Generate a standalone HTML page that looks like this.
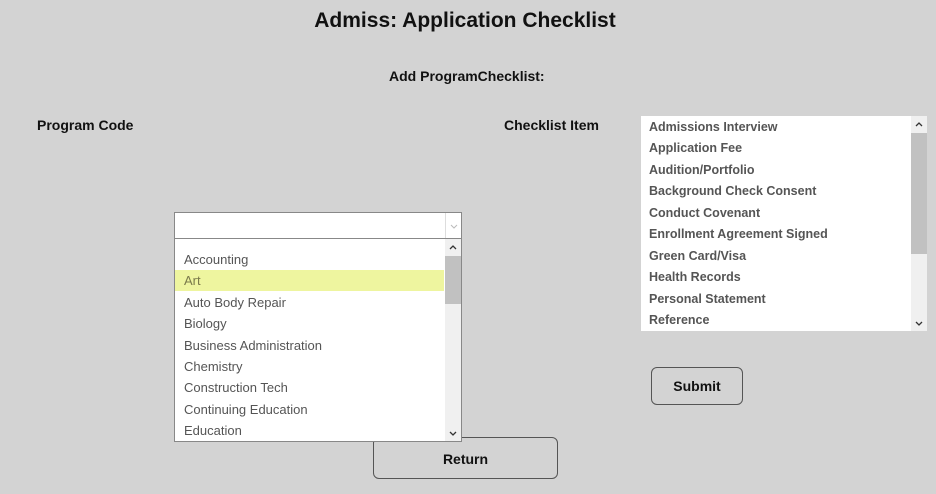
<!DOCTYPE html><html><head><style>
body{margin:0;width:936px;height:494px;background:#d3d3d3;font-family:"Liberation Sans",sans-serif;position:relative;overflow:hidden}
.a{position:absolute;white-space:nowrap}
.h{font-weight:bold;color:#111}
.li{position:absolute;left:9px;font-size:13px;color:#555}
.ri{position:absolute;left:8px;font-size:12.5px;font-weight:bold;color:#555}
.btn{position:absolute;border:1px solid #555;border-radius:6px;background:#d3d3d3;font-weight:bold;font-size:14px;color:#111;text-align:center}
.ar{position:absolute;right:4px}
</style></head><body>
<div class="a h" style="left:0;width:930px;text-align:center;top:9px;font-size:21px">Admiss: Application Checklist</div>
<div class="a h" style="left:389px;top:68px;font-size:14px">Add ProgramChecklist:</div>
<div class="a h" style="left:37px;top:117px;font-size:14px">Program Code</div>
<div class="a h" style="left:504px;top:117px;font-size:14px">Checklist Item</div>

<div class="btn" style="left:373px;top:437px;width:183px;height:40px;line-height:42px">Return</div>

<div class="a" style="left:174px;top:212px;width:286px;height:25px;background:#fff;border:1px solid #888"><svg style="position:absolute;right:3px;top:11px" width="8" height="5"><path d="M1 1L4 4L7 1" stroke="#bbb" fill="none"/></svg><div style="position:absolute;right:15px;top:0;bottom:0;border-left:1px solid #ddd"></div></div>
<div class="a" style="left:174px;top:238px;width:286px;height:202px;background:#fff;border:1px solid #888;overflow:hidden">
<div style="position:absolute;left:0;top:31px;width:269px;height:21px;background:#eef59f"></div>
<div class="li" style="top:13px">Accounting</div>
<div class="li" style="top:34px;color:#7a7a4a">Art</div>
<div class="li" style="top:56px">Auto Body Repair</div>
<div class="li" style="top:77px">Biology</div>
<div class="li" style="top:99px">Business Administration</div>
<div class="li" style="top:120px">Chemistry</div>
<div class="li" style="top:141px">Construction Tech</div>
<div class="li" style="top:163px">Continuing Education</div>
<div class="li" style="top:184px">Education</div>
<div style="position:absolute;right:0;top:0;width:16px;height:202px;background:#f0f0f0"></div>
<div style="position:absolute;right:0;top:17px;width:16px;height:48px;background:#c1c1c1"></div>
<svg class="ar" style="top:6px" width="8" height="5"><path d="M1 4L4 1L7 4" stroke="#333" stroke-width="1.3" fill="none"/></svg>
<svg class="ar" style="bottom:5px" width="8" height="5"><path d="M1 1L4 4L7 1" stroke="#333" stroke-width="1.3" fill="none"/></svg>
</div>

<div class="a" style="left:641px;top:116px;width:286px;height:215px;background:#fff;overflow:hidden">
<div class="ri" style="top:4px">Admissions Interview</div>
<div class="ri" style="top:25px">Application Fee</div>
<div class="ri" style="top:47px">Audition/Portfolio</div>
<div class="ri" style="top:68px">Background Check Consent</div>
<div class="ri" style="top:90px">Conduct Covenant</div>
<div class="ri" style="top:111px">Enrollment Agreement Signed</div>
<div class="ri" style="top:133px">Green Card/Visa</div>
<div class="ri" style="top:154px">Health Records</div>
<div class="ri" style="top:176px">Personal Statement</div>
<div class="ri" style="top:197px">Reference</div>
<div style="position:absolute;right:0;top:0;width:16px;height:215px;background:#f0f0f0"></div>
<div style="position:absolute;right:0;top:17px;width:16px;height:121px;background:#c1c1c1"></div>
<svg class="ar" style="top:6px" width="8" height="5"><path d="M1 4L4 1L7 4" stroke="#333" stroke-width="1.3" fill="none"/></svg>
<svg class="ar" style="bottom:5px" width="8" height="5"><path d="M1 1L4 4L7 1" stroke="#333" stroke-width="1.3" fill="none"/></svg>
</div>

<div class="btn" style="left:651px;top:367px;width:90px;height:36px;line-height:36px">Submit</div>
</body></html>
